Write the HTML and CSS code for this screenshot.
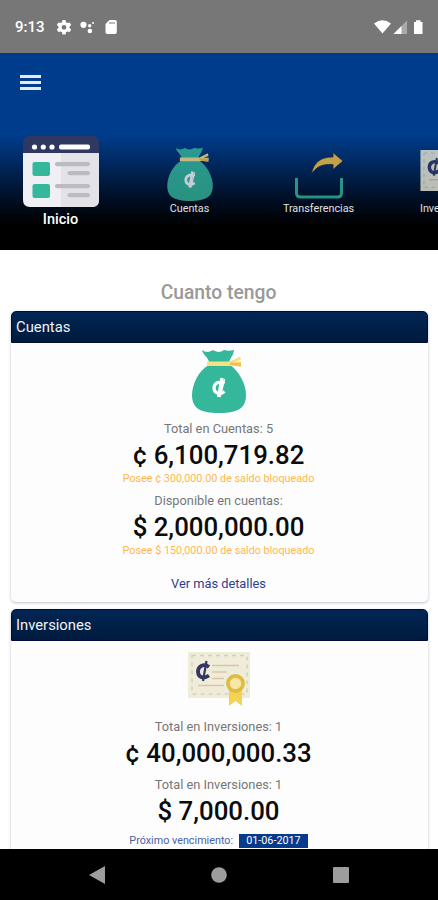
FILE: index.html
```
<!DOCTYPE html>
<html lang="es">

<head>
    <meta charset="UTF-8">
    <meta name="viewport" content="width=device-width, initial-scale=1.0">
    <title>Inicio</title>
    <link rel="stylesheet" href="styles.css">
</head>

<body>
    <!-- Shared shapes -->
    <svg class="sprite" width="0" height="0">
        <symbol id="money-bag" viewBox="0 0 54 64">
            <path fill="#35b79b" d="M10 1c4 3 8 2 11 0 3 2 7 3 11 0 3 1 7 1 10 0 0 4-3 7-5 12H17C16 8 11 6 10 1z" />
            <path fill="#35b79b" d="M17 16h21c9 6 16 19 16 30 0 13-8 18-27 18S0 59 0 46c0-11 7-25 17-30z" />
            <path fill="#f9df83" d="M15 12.500h23l10-5 1 2.800-6 3 6-1v3l-10 1.700H15z" />
            <path fill="#f5bf49" d="M38 13.500l11 .5v3.700l-11-1.700z" />
            <path fill="none" stroke="#fff" stroke-width="3.200" d="M32.500 34.500c-5-3-10.500-.5-10.500 4.500s5.500 7.500 10.500 3.500M30 29l-3.500 19" />
            <path fill="none" stroke="#fff" stroke-width="1.500" d="M32.500 30l-4.500 18" />
        </symbol>
        <symbol id="certificate" viewBox="0 0 62 54">
            <path fill="#efedda" d="M0 0h62v46H0z" />
            <path fill="none" stroke="#cfd1c0" stroke-width="1.500" stroke-dasharray="4 4" d="M4 3.500h55v38.500H4z" />
            <path stroke="#dfc4aa" stroke-width="1.500" d="M24 13.500h27M24 20h15M24 26.500h12M10 33.500h26" />
            <path fill="none" stroke="#343763" stroke-width="3.800" d="M21 15c-5-4-11-1-11 4.500s5 8 11 4" />
            <path stroke="#343763" stroke-width="2.200" d="M18.500 9l-3.500 20" />
            <path fill="#f3d254" d="M41 36h13v18l-6.500-5-6.500 5z" />
            <circle cx="47.500" cy="31.500" r="7.600" fill="#f6e7a6" stroke="#ddbd40" stroke-width="3.600" />
        </symbol>
    </svg>

    <div class="screen">
        <div class="status-bar">
            <span class="status-time">9:13</span>
            <svg class="status-left" width="62" height="16" viewBox="0 0 62 16" fill="#fff">
                <path fill-rule="evenodd" d="M5.500 1h3l.5 2.200 1.500.9 2.200-.7 1.500 2.600-1.700 1.500v1.500l1.700 1.500-1.500 2.600-2.200-.7-1.500.9-.5 2.200h-3L5 13.300l-1.500-.9-2.200.7-1.500-2.600L1.500 9V7.500L-.2 6l1.500-2.600 2.200.7L5 3.200zM7 5.900a2.400 2.400 0 1 0 0 4.800 2.400 2.400 0 0 0 0-4.800z" />
                <circle cx="26.500" cy="5.800" r="3.100" />
                <circle cx="32.700" cy="6.800" r="1.700" />
                <circle cx="32.900" cy="12" r="2.300" />
                <circle cx="36" cy="4" r="1" />
                <path fill-rule="evenodd" d="M52.500 1H58q1.800 0 1.800 1.800v10.400q0 1.800-1.800 1.800h-7.700q-1.800 0-1.800-1.800V5zM52.500 3v2h1V3zm2 0v2h1V3zm2 0v2h1V3z" />
            </svg>
            <svg class="status-right" width="50" height="16" viewBox="0 0 50 16" fill="#fff">
                <path d="M0 4.500Q8.500-2 17 4.500L8.500 14.500z" />
                <path fill="#aaa" d="M33 1.500V15H19.500z" />
                <path d="M27.500 7v8h-8z" />
                <path d="M40 3h2V1.200h4.500V3h2v12H40z" />
            </svg>
        </div>

        <header class="app-header">
            <button class="menu-button" aria-label="Menú">
                <span></span>
                <span></span>
                <span></span>
            </button>

            <nav class="tabs">
                <a class="tab active">
                    <svg width="76" height="71" viewBox="0 0 76 71">
                        <path fill="#f0eff5" d="M0 17h76v47q0 7-7 7H7q-7 0-7-7z" />
                        <path fill="#e3e2e9" d="M38 17h38v47q0 7-7 7H38z" />
                        <path fill="#303861" d="M7 0h62q7 0 7 7v10H0V7q0-7 7-7z" />
                        <g fill="#fff">
                            <circle cx="11.500" cy="11" r="2.600" />
                            <circle cx="20.300" cy="11" r="2.600" />
                            <circle cx="29" cy="11" r="2.600" />
                            <rect x="36" y="8.500" width="31" height="5" rx="2" />
                        </g>
                        <g fill="#35b79b">
                            <rect x="9.500" y="26" width="17.500" height="14" rx="2" />
                            <rect x="9.500" y="48" width="17.500" height="14" rx="2" />
                        </g>
                        <g fill="#bcbbc1">
                            <rect x="32" y="26" width="35" height="4.300" rx="2" />
                            <rect x="44.500" y="35" width="22.500" height="4.300" rx="2" />
                            <rect x="32" y="48" width="35" height="4.300" rx="2" />
                            <rect x="44.500" y="57" width="22.500" height="4.300" rx="2" />
                        </g>
                    </svg>
                    <span>Inicio</span>
                </a>
                <a class="tab">
                    <svg width="46" height="54"><use href="#money-bag" /></svg>
                    <span>Cuentas</span>
                </a>
                <a class="tab tab-transfer">
                    <svg width="48" height="47" viewBox="0 0 48 47">
                        <path fill="none" stroke="#30b8a2" stroke-width="3" d="M1.500 26v15q0 4 4 4h37q4 0 4-4V26" />
                        <path fill="#f9c440" stroke="#1c2348" stroke-width=".8" d="M16.500 22C18 11 26 4.500 38 5V.5l10 8.500-10 8.500v-5C28 12 22 14 16.500 22z" />
                    </svg>
                    <span>Transferencias</span>
                </a>
                <a class="tab tab-invest">
                    <svg width="56" height="48"><use href="#certificate" /></svg>
                    <span>Inversiones</span>
                </a>
            </nav>
        </header>

        <main class="content">
            <h1>Cuanto tengo</h1>

            <section class="card">
                <h2 class="card-title">Cuentas</h2>
                <div class="card-body">
                    <svg class="card-icon" width="54" height="64"><use href="#money-bag" /></svg>
                    <p class="label">Total en Cuentas: 5</p>
                    <p class="amount">¢ 6,100,719.82</p>
                    <p class="blocked">Posee ¢ 300,000.00 de saldo bloqueado</p>
                    <p class="label">Disponible en cuentas:</p>
                    <p class="amount">$ 2,000,000.00</p>
                    <p class="blocked">Posee $ 150,000.00 de saldo bloqueado</p>
                    <a class="details">Ver más detalles</a>
                </div>
            </section>

            <section class="card investments">
                <h2 class="card-title">Inversiones</h2>
                <div class="card-body">
                    <svg class="card-icon" width="62" height="54"><use href="#certificate" /></svg>
                    <p class="label">Total en Inversiones: 1</p>
                    <p class="amount">¢ 40,000,000.33</p>
                    <p class="label">Total en Inversiones: 1</p>
                    <p class="amount">$ 7,000.00</p>
                    <p class="due">Próximo vencimiento: <span class="due-date">01-06-2017</span></p>
                </div>
            </section>
        </main>

        <div class="nav-bar">
            <svg width="16" height="18" viewBox="0 0 16 18"><path fill="#9d9d9d" d="M16 0v18L0 9z" /></svg>
            <svg width="16" height="16" viewBox="0 0 16 16"><circle cx="8" cy="8" r="7.800" fill="#9d9d9d" /></svg>
            <svg width="16" height="16" viewBox="0 0 16 16"><rect width="16" height="16" rx="1" fill="#9d9d9d" /></svg>
        </div>
    </div>
</body>

</html>
```
FILE: styles.css
```
/* Reset and base styles */
* {
    box-sizing: border-box;
    margin: 0;
    padding: 0;
}

body {
    font-family: Roboto, "Liberation Sans", sans-serif;
    color: #111;
    background-color: #fff;
}

svg {
    display: block;
    flex-shrink: 0;
}

.sprite {
    position: absolute;
}

.screen {
    display: flex;
    flex-direction: column;
    width: 438px;
    height: 900px;
    overflow: hidden;
}

/* Status bar */
.status-bar {
    display: flex;
    align-items: center;
    height: 53px;
    flex-shrink: 0;
    padding: 1px 14px 0 15px;
    background-color: #777;
}

.status-time {
    width: 42px;
    color: #fff;
    font-size: 15px;
    font-weight: 500;
}

.status-right {
    margin-left: auto;
}

/* Header */
.app-header {
    height: 197px;
    flex-shrink: 0;
    overflow: hidden;
    background: linear-gradient(#003c8c 0, #003c8c 82px, #00275c 112px, #00112a 142px, #000 172px);
}

.menu-button {
    display: flex;
    flex-direction: column;
    gap: 3px;
    margin: 22px 0 0 20px;
    border: none;
    background: none;
}

.menu-button span {
    width: 21px;
    height: 3px;
    background-color: #e6e9f8;
}

/* Tabs */
.tabs {
    display: flex;
    height: 100px;
    margin: 46px 0 0 -4px;
}

.tab {
    display: flex;
    flex-direction: column;
    align-items: center;
    width: 129px;
    flex-shrink: 0;
    padding-top: 11px;
    color: #fff;
    font-size: 10.8px;
    line-height: 16px;
}

.tab svg {
    opacity: 0.78;
}

.tab span {
    opacity: 0.88;
}

.tab.active {
    padding-top: 0;
    font-size: 14.5px;
    font-weight: 500;
    line-height: 26px;
}

.tab.active svg,
.tab.active span {
    opacity: 1;
}

.tab-transfer {
    padding-top: 16px;
}

.tab-transfer span {
    margin-top: 2px;
}

.tab-invest {
    padding-top: 14px;
}

.tab-invest span {
    margin-top: 3px;
}

/* Content */
.content {
    flex: 1;
    min-height: 0;
    overflow: hidden;
    padding: 31px 10px 0 11px;
    background-color: #fff;
}

h1 {
    height: 30px;
    padding-right: 2px;
    color: #999;
    font-size: 19.3px;
    font-weight: 500;
    line-height: 24px;
    text-align: center;
}

/* Cards */
.card {
    height: 291px;
    margin-bottom: 7px;
    border-radius: 5px;
    background-color: #fdfdfd;
    box-shadow: 0 1px 3px rgba(40, 40, 90, 0.3);
}

.card-title {
    height: 32px;
    padding-left: 4px;
    border: 1px solid #000d3c;
    border-radius: 5px 5px 0 0;
    background: linear-gradient(#002654, #001a3d);
    color: #f2f2f5;
    font-size: 14.8px;
    font-weight: 400;
    line-height: 31px;
}

.card-body {
    display: flex;
    flex-direction: column;
    align-items: center;
    padding: 6px 2px 0 0;
    text-align: center;
    white-space: nowrap;
}

.card-icon {
    margin-bottom: 7px;
}

.label {
    height: 18px;
    color: #777;
    font-size: 12.8px;
    line-height: 18px;
}

.amount {
    height: 34px;
    color: #0b0b0b;
    font-size: 25.8px;
    font-weight: 500;
    line-height: 35px;
}

.blocked {
    height: 13px;
    margin-bottom: 7px;
    color: #ffb74d;
    font-size: 10.8px;
    line-height: 13px;
}

.details {
    margin-top: 11px;
    color: #2c3f8f;
    font-size: 12.8px;
    line-height: 18px;
}

/* Investments */
.investments {
    height: 300px;
}

.investments .card-body {
    padding-top: 11px;
}

.investments .card-icon {
    margin-bottom: 12px;
}

.investments .amount {
    margin-bottom: 6px;
}

.due {
    display: flex;
    align-items: center;
    gap: 6px;
    color: #4b5fa3;
    font-size: 10.8px;
    line-height: 14px;
}

.due-date {
    padding: 0 7px;
    background-color: #083a8c;
    color: #fff;
}

/* Navigation bar */
.nav-bar {
    display: flex;
    align-items: center;
    justify-content: space-between;
    height: 51px;
    flex-shrink: 0;
    padding: 0 89px;
    background-color: #000;
}
```
